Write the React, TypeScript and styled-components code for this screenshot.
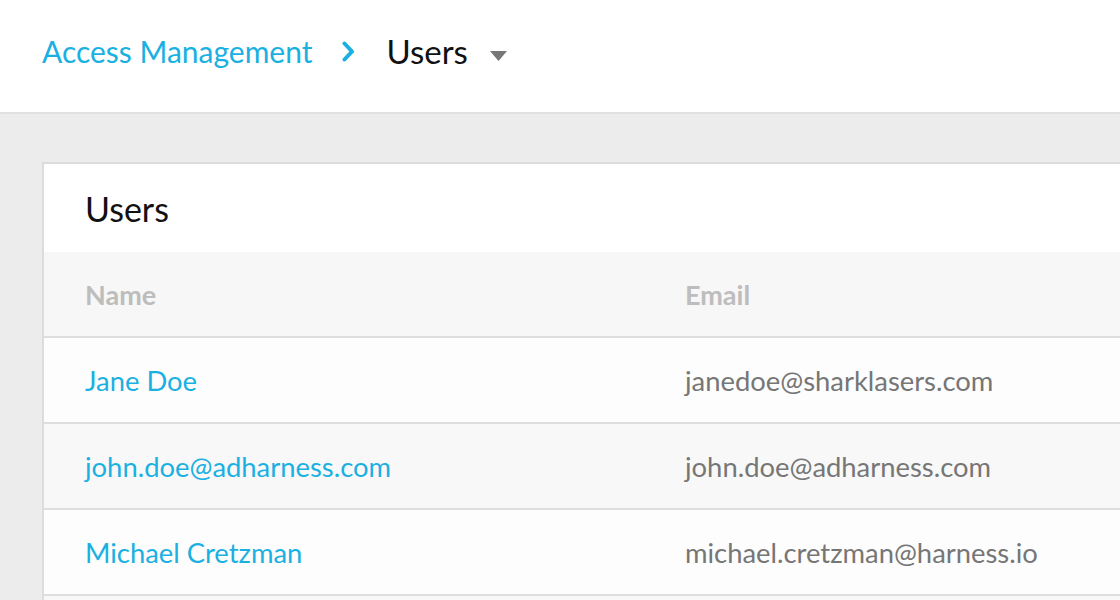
import React from "react";
import styled, { createGlobalStyle } from "styled-components";

const Global = createGlobalStyle`
  html, body { margin: 0; padding: 0; }
  body {
    font-family: Lato, "Open Sans", sans-serif;
    background: #ececec;
    width: 1120px;
    height: 600px;
    overflow: hidden;
  }
`;

const Page = styled.div`
  display: flex;
  flex-direction: column;
  height: 600px;
  overflow: hidden;
  background: #ececec;
`;

const TopBar = styled.header`
  flex-shrink: 0;
  height: 114px;
  box-sizing: border-box;
  background: #ffffff;
  border-bottom: 2px solid #e1e1e1;
  display: flex;
  align-items: center;
  padding-left: 42px;
  padding-bottom: 10px;
`;

const Crumb = styled.a`
  color: #1ab0e2;
  font-size: 30px;
  text-decoration: none;
`;

const Separator = styled.svg`
  margin: 0 31px 0 30px;
`;

const Current = styled.span`
  color: #111;
  font-size: 33px;
`;

const Caret = styled.svg`
  margin-left: 22px;
  margin-top: 10px;
`;

const Content = styled.main`
  padding: 48px 0 0 42px;
  flex: 1;
  min-height: 0;
`;

const Card = styled.section`
  background: #fff;
  border: 2px solid #dcdcdc;
  border-right: none;
  border-bottom: none;
`;

const CardTitle = styled.h2`
  margin: 0;
  height: 88px;
  display: flex;
  align-items: center;
  padding-left: 41px;
  font-size: 34px;
  font-weight: 400;
  color: #111;
`;

const Row = styled.div<{ $bg: string }>`
  display: grid;
  grid-template-columns: 600px 1fr;
  height: 84px;
  align-items: center;
  padding-left: 41px;
  background: ${(p) => p.$bg};
  border-bottom: 2px solid #dedede;
`;

const HeadCell = styled.div`
  color: #bdbdbd;
  font-size: 27px;
  font-weight: 700;
`;

const NameCell = styled.a`
  color: #1ab0e2;
  font-size: 27.4px;
  text-decoration: none;
`;

const EmailCell = styled.div`
  color: #767676;
  font-size: 27.4px;
`;

const users = [
  { name: "Jane Doe", email: "janedoe@sharklasers.com" },
  { name: "john.doe@adharness.com", email: "john.doe@adharness.com" },
  { name: "Michael Cretzman", email: "michael.cretzman@harness.io" },
  { name: "", email: "" },
];

export default function App() {
  return (
    <Page>
      <Global />
      <TopBar>
        <Crumb href="#">Access Management</Crumb>
        <Separator width="13" height="21" viewBox="0 0 13 21">
          <path
            d="M2.5 2.5 L10 10.5 L2.5 18.5"
            stroke="#1ab0e2"
            strokeWidth="4"
            strokeLinecap="round"
            strokeLinejoin="round"
            fill="none"
          />
        </Separator>
        <Current>Users</Current>
        <Caret width="17" height="10" viewBox="0 0 17 10">
          <path d="M0 0 H17 L8.5 10 Z" fill="#777" />
        </Caret>
      </TopBar>
      <Content>
        <Card>
          <CardTitle>Users</CardTitle>
          <Row $bg="#f7f7f7">
            <HeadCell>Name</HeadCell>
            <HeadCell>Email</HeadCell>
          </Row>
          {users.map((u, i) => (
            <Row key={i} $bg={i % 2 === 0 ? "#fdfdfd" : "#f8f8f8"}>
              <NameCell href="#">{u.name}</NameCell>
              <EmailCell>{u.email}</EmailCell>
            </Row>
          ))}
        </Card>
      </Content>
    </Page>
  );
}
